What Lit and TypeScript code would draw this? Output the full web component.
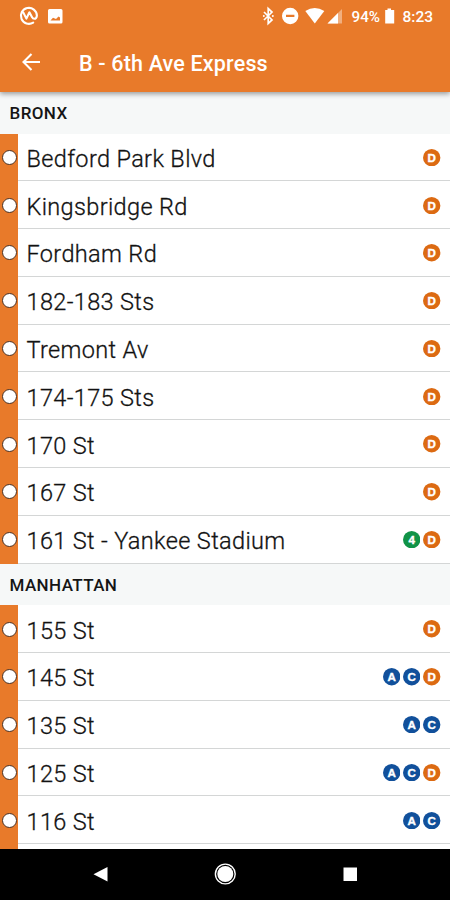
import { LitElement, html, css, svg } from "lit";
import { customElement, property } from "lit/decorators.js";

type Stop = [name: string, transfers: string];

const BRONX: Stop[] = [
  ["Bedford Park Blvd", "D"],
  ["Kingsbridge Rd", "D"],
  ["Fordham Rd", "D"],
  ["182-183 Sts", "D"],
  ["Tremont Av", "D"],
  ["174-175 Sts", "D"],
  ["170 St", "D"],
  ["167 St", "D"],
  ["161 St - Yankee Stadium", "4D"],
];

const MANHATTAN: Stop[] = [
  ["155 St", "D"],
  ["145 St", "ACD"],
  ["135 St", "AC"],
  ["125 St", "ACD"],
  ["116 St", "AC"],
  ["", ""],
];

@customElement("status-bar")
export class StatusBar extends LitElement {
  static styles = css`
    :host { display: block; height: 32px; color: #fff; }
    svg { display: block; width: 450px; height: 32px; }
    text { font: 500 14.5px Roboto, sans-serif; fill: #fff; }
  `;
  render() {
    return html`<svg viewBox="0 0 450 32" fill="#fff">
      <path d="M33.200 22.600A8 8 0 1 1 36.900 15.600Q36.600 18.800 34.300 18.800Q32.800 18.800 32.200 17.400L29.400 12.300L26.400 18.600L23.400 12.600" fill="none" stroke="#fff" stroke-width="2.100" stroke-linejoin="round" stroke-linecap="round"/>
      <path d="M49.500 9H61a1.500 1.500 0 0 1 1.500 1.500V22a1.500 1.500 0 0 1-1.500 1.500H49.500a1.500 1.500 0 0 1-1.500-1.500V10.500A1.500 1.500 0 0 1 49.500 9ZM50.500 20.500H60V17.500L58.500 16.500L56 19L53 17.700Z" fill-rule="evenodd"/>
      <path d="M264 12L272 20L268.200 23.500V8.500L272 12L264 20" fill="none" stroke="#fff" stroke-width="1.700"/>
      <circle cx="263.800" cy="16" r="1"/><circle cx="272.800" cy="16" r="1"/>
      <path d="M290.200 7.800a8.200 8.200 0 1 0 0 16.400a8.200 8.200 0 0 0 0-16.400ZM286 14.800h8.400v2.200H286Z" fill-rule="evenodd"/>
      <path d="M305.300 11Q314.700 5 324.300 11L314.800 23.500Z"/>
      <path d="M342 9V23.500H327.500Z" fill-opacity=".4"/>
      <path d="M338 13V23.500H327.500Z"/>
      <text x="351.500" y="21.500" textLength="28.500" lengthAdjust="spacingAndGlyphs">94%</text>
      <path d="M387.500 8.500h3.500v1.500h3.200v13.500h-9V10h2.300Z"/>
      <text x="402.500" y="21.500" textLength="30.500" lengthAdjust="spacingAndGlyphs">8:23</text>
    </svg>`;
  }
}

@customElement("stop-row")
export class StopRow extends LitElement {
  @property() name = "";
  @property() transfers = "";
  static styles = css`
    :host { display: flex; height: 47.800px; flex: none; background: #fff; }
    .track { width: 18px; flex: none; background: #e87a2a; display: flex; align-items: center; justify-content: center; }
    .dot { width: 13px; height: 13px; border: 1.500px solid #4a3022; border-radius: 50%; background: #fff; flex: none; }
    .body { flex: 1; display: flex; align-items: center; box-sizing: border-box; border-bottom: 1.500px solid #d4d6d6; padding: 3px 9.400px 0 8.500px; }
    .name { flex: 1; font: 300 23.500px/28px Roboto, sans-serif; letter-spacing: .36px; color: #0c0c0c; -webkit-text-stroke: .3px #222; white-space: nowrap; padding-top: 1px; }
    .bullets { display: flex; gap: 2.800px; margin-bottom: 2px; }
    svg { display: block; width: 17.400px; height: 17.400px; }
    text { font: 700 12px "Liberation Sans", Arial, sans-serif; fill: #fff; stroke: #fff; stroke-width: .4px; text-anchor: middle; }
    .D { fill: #dc6a12; }
    .A, .C { fill: #11509b; }
    .g { fill: #109347; }
  `;
  render() {
    return html`<div class="track">${this.name ? html`<span class="dot"></span>` : ""}</div>
      <div class="body">
        <span class="name">${this.name}</span>
        <span class="bullets">${[...this.transfers].map(
          (t) => html`<svg viewBox="0 0 18 18">${svg`<circle class=${t === "4" ? "g" : t} cx="9" cy="9" r="9"/><text x="9" y="13.200">${t}</text>`}</svg>`
        )}</span>
      </div>`;
  }
}

@customElement("app-root")
export class AppRoot extends LitElement {
  static styles = css`
    :host { display: flex; flex-direction: column; width: 450px; height: 900px; overflow: hidden; background: #fff; font-family: Roboto, sans-serif; }
    header { flex: none; height: 92px; background: #e87a2a; box-shadow: 0 2px 5px rgba(0, 0, 0, .38); position: relative; }
    .bar { display: flex; align-items: center; height: 60px; padding-left: 22px; }
    .back { width: 19px; height: 18px; }
    h1 { margin: 3px 0 0 38px; font: 500 21.500px/28px Roboto, sans-serif; letter-spacing: .18px; color: #fff; white-space: nowrap; }
    main { flex: 1; overflow: hidden; display: flex; flex-direction: column; }
    h2 { flex: none; box-sizing: border-box; margin: 0; height: 41.500px; padding: 1px 0 0 9.500px; background: #f6f8f8; font: 500 17px/41px Roboto, sans-serif; letter-spacing: .4px; color: #151515; }
    nav { flex: none; height: 51px; background: #000; }
    nav svg { display: block; }
  `;
  private section(title: string, stops: Stop[]) {
    return html`<h2>${title}</h2>${stops.map(([n, t]) => html`<stop-row .name=${n} .transfers=${t}></stop-row>`)}`;
  }
  render() {
    return html`
      <header>
        <status-bar></status-bar>
        <div class="bar">
          <svg class="back" viewBox="0 0 19 18"><path d="M18 9H2M9.500 1L1.500 9L9.500 17" fill="none" stroke="#fff" stroke-width="2.100"/></svg>
          <h1>B - 6th Ave Express</h1>
        </div>
      </header>
      <main>${this.section("BRONX", BRONX)}${this.section("MANHATTAN", MANHATTAN)}</main>
      <nav>
        <svg width="450" height="51" viewBox="0 0 450 51" fill="#fff">
          <path d="M107.500 18V32.500L93.500 25.200Z"/>
          <circle cx="225.300" cy="25" r="8"/>
          <circle cx="225.300" cy="25" r="9.900" fill="none" stroke="#fff" stroke-width="1.400"/>
          <path d="M343.500 18.500h13.500v13.500h-13.500Z"/>
        </svg>
      </nav>`;
  }
}
